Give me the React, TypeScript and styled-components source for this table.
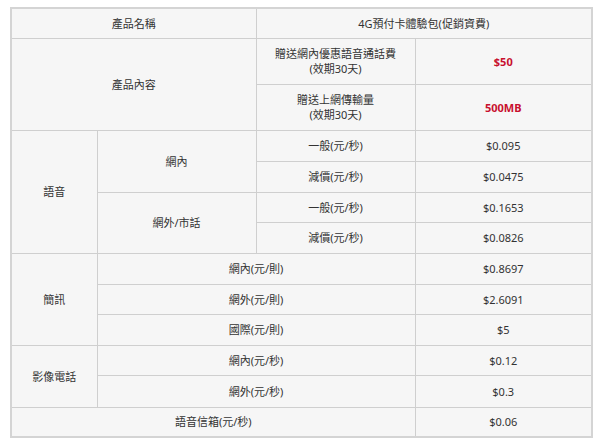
import React from "react";
import styled, { createGlobalStyle } from "styled-components";

const Global = createGlobalStyle`
  html, body { margin: 0; padding: 0; background: #ffffff; }
  body { font-family: "Noto Sans", "Noto Sans CJK TC", sans-serif; }
`;

const Page = styled.div`
  padding: 7px 10px 0 10px;
`;

const Table = styled.table`
  width: 581px;
  border-collapse: collapse;
  table-layout: fixed;
  background: #f6f6f6;
  border: 2px solid #d4d4d4;
  font-size: 11px;
  color: #333333;
`;

const Row = styled.tr<{ $h: number }>`
  height: ${(p) => p.$h}px;
`;

const Cell = styled.td<{ $red?: boolean }>`
  border: 1px solid #cfcfcf;
  text-align: center;
  vertical-align: middle;
  padding: 0 4px;
  line-height: 15px;
  font-weight: ${(p) => (p.$red ? 700 : 400)};
  color: ${(p) => (p.$red ? "#c8102e" : "#333333")};
`;

const Col = styled.col<{ $w: number }>`
  width: ${(p) => p.$w}px;
`;

export default function App() {
  return (
    <Page>
      <Global />
      <Table>
        <colgroup>
          <Col $w={86} />
          <Col $w={159} />
          <Col $w={159} />
          <Col $w={177} />
        </colgroup>
        <tbody>
          <Row $h={30}>
            <Cell colSpan={2}>產品名稱</Cell>
            <Cell colSpan={2}>4G預付卡體驗包(促銷資費)</Cell>
          </Row>
          <Row $h={46}>
            <Cell colSpan={2} rowSpan={2}>產品內容</Cell>
            <Cell>
              贈送網內優惠語音通話費
              <br />
              (效期30天)
            </Cell>
            <Cell $red>$50</Cell>
          </Row>
          <Row $h={46}>
            <Cell>
              贈送上網傳輸量
              <br />
              (效期30天)
            </Cell>
            <Cell $red>500MB</Cell>
          </Row>
          <Row $h={31}>
            <Cell rowSpan={4}>語音</Cell>
            <Cell rowSpan={2}>網內</Cell>
            <Cell>一般(元/秒)</Cell>
            <Cell>$0.095</Cell>
          </Row>
          <Row $h={31}>
            <Cell>減價(元/秒)</Cell>
            <Cell>$0.0475</Cell>
          </Row>
          <Row $h={30}>
            <Cell rowSpan={2}>網外/市話</Cell>
            <Cell>一般(元/秒)</Cell>
            <Cell>$0.1653</Cell>
          </Row>
          <Row $h={31}>
            <Cell>減價(元/秒)</Cell>
            <Cell>$0.0826</Cell>
          </Row>
          <Row $h={31}>
            <Cell rowSpan={3}>簡訊</Cell>
            <Cell colSpan={2}>網內(元/則)</Cell>
            <Cell>$0.8697</Cell>
          </Row>
          <Row $h={30}>
            <Cell colSpan={2}>網外(元/則)</Cell>
            <Cell>$2.6091</Cell>
          </Row>
          <Row $h={31}>
            <Cell colSpan={2}>國際(元/則)</Cell>
            <Cell>$5</Cell>
          </Row>
          <Row $h={30}>
            <Cell rowSpan={2}>影像電話</Cell>
            <Cell colSpan={2}>網內(元/秒)</Cell>
            <Cell>$0.12</Cell>
          </Row>
          <Row $h={32}>
            <Cell colSpan={2}>網外(元/秒)</Cell>
            <Cell>$0.3</Cell>
          </Row>
          <Row $h={30}>
            <Cell colSpan={3}>語音信箱(元/秒)</Cell>
            <Cell>$0.06</Cell>
          </Row>
        </tbody>
      </Table>
    </Page>
  );
}
